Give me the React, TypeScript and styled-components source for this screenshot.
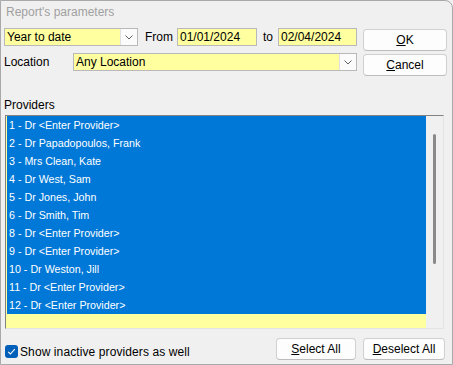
import React from 'react';
import styled, {createGlobalStyle} from 'styled-components';

const GlobalStyle = createGlobalStyle`
    html, body {
        margin: 0;
        padding: 0;
        background: #f0f0f0;
    }

    body {
        font-family: 'Liberation Sans', Arial, sans-serif;
        font-size: 12px;
        color: #000;
    }
`;

const Window = styled.div`
    width: 453px;
    height: 365px;
    box-sizing: border-box;
    background: #f0f0f0;
    border: 1px solid #a9a9a9;
    border-top-right-radius: 8px;
    padding: 0 5px 0 3px;
    display: flex;
    flex-direction: column;
    overflow: hidden;
`;

const Title = styled.div`
    height: 24px;
    line-height: 22px;
    padding-left: 2px;
    color: #a0a0a0;
`;

const TopArea = styled.div`
    display: flex;
    gap: 6px;
    margin-top: 3px;
`;

const Fields = styled.div`
    width: 353px;
    display: flex;
    flex-direction: column;
    gap: 7px;
`;

const Row = styled.div`
    display: flex;
    align-items: center;
    height: 18px;
`;

const Label = styled.span<{$left?: number; $right?: number}>`
    margin-left: ${(p) => p.$left ?? 0}px;
    margin-right: ${(p) => p.$right ?? 0}px;
    white-space: nowrap;
`;

const Field = styled.div<{$width: number}>`
    width: ${(p) => p.$width}px;
    height: 18px;
    box-sizing: border-box;
    background: #ffffa0;
    border: 1px solid #b9b9b9;
    display: flex;
    align-items: center;
    padding-left: 2px;
    line-height: 16px;
    white-space: nowrap;
    overflow: hidden;
`;

const FieldText = styled.span`
    flex: 1;
`;

const DropButton = styled.span`
    width: 17px;
    height: 16px;
    box-sizing: border-box;
    background: #fbfbfb;
    border-left: 1px solid #e0e0e0;
    display: flex;
    align-items: center;
    justify-content: center;

    svg {
        width: 8px;
        height: 5px;
    }
`;

const Buttons = styled.div`
    width: 84px;
    display: flex;
    flex-direction: column;
    gap: 3px;
    margin-top: 1px;
`;

const Button = styled.button<{$width?: number}>`
    appearance: none;
    width: ${(p) => (p.$width ? `${p.$width}px` : '100%')};
    height: 22px;
    box-sizing: border-box;
    background: #fdfdfd;
    border: 1px solid #d0d0d0;
    border-bottom-color: #bcbcbc;
    border-radius: 4px;
    font-family: inherit;
    font-size: 12px;
    color: #000;
    padding: 0;
    line-height: 20px;

    u {
        text-decoration: underline;
        text-underline-offset: 1px;
    }
`;

const SectionLabel = styled.div`
    margin-top: 22px;
    height: 14px;
    line-height: 14px;
`;

const ListBox = styled.div`
    margin: 3px 3px 0 1px;
    height: 214px;
    box-sizing: border-box;
    border: 1px solid #e3e3e3;
    border-top-color: #828282;
    border-left-color: #828282;
    display: flex;
    background: #ffffa0;
`;

const Items = styled.div`
    flex: 1;
    padding-left: 1px;
    display: flex;
    flex-direction: column;
`;

const Item = styled.div<{$selected?: boolean}>`
    height: 18px;
    line-height: 18px;
    padding-left: 2px;
    font-size: 10.7px;
    background: ${(p) => (p.$selected ? '#0078d7' : 'transparent')};
    color: ${(p) => (p.$selected ? '#fff' : '#000')};
    white-space: nowrap;
`;

const ScrollTrack = styled.div`
    width: 17px;
    background: #f0f0f0;
    display: flex;
    justify-content: center;
    padding-top: 18px;
    box-sizing: border-box;
`;

const ScrollThumb = styled.div`
    width: 3px;
    height: 130px;
    border-radius: 2px;
    background: #8a8a8a;
`;

const Footer = styled.div`
    margin: 9px 2px 0 1px;
    height: 22px;
    display: flex;
    align-items: center;
    gap: 7px;
`;

const CheckLabel = styled.label`
    display: flex;
    align-items: center;
    gap: 2px;
    margin-right: auto;
    margin-top: 5px;
    white-space: nowrap;
    letter-spacing: 0.1px;
`;

const CheckBox = styled.span`
    width: 13px;
    height: 13px;
    box-sizing: border-box;
    border-radius: 3px;
    background: #005fb8;
    display: flex;
    align-items: center;
    justify-content: center;

    svg {
        width: 9px;
        height: 9px;
    }
`;

const Chevron = () => (
    <svg viewBox='0 0 8 5'>
        <path d='M0.5 0.5 L4 4 L7.5 0.5' fill='none' stroke='#606060' strokeWidth='1' />
    </svg>
);

const providers = [
    '1 - Dr <Enter Provider>',
    '2 - Dr Papadopoulos, Frank',
    '3 - Mrs Clean, Kate',
    '4 - Dr West, Sam',
    '5 - Dr Jones, John',
    '6 - Dr Smith, Tim',
    '8 - Dr <Enter Provider>',
    '9 - Dr <Enter Provider>',
    '10 - Dr Weston, Jill',
    '11 - Dr <Enter Provider>',
    '12 - Dr <Enter Provider>'
];

const App = () => (
    <>
        <GlobalStyle />
        <Window>
            <Title>Report's parameters</Title>

            <TopArea>
                <Fields>
                    <Row>
                        <Field $width={134}>
                            <FieldText>Year to date</FieldText>
                            <DropButton>
                                <Chevron />
                            </DropButton>
                        </Field>
                        <Label $left={7} $right={4}>From</Label>
                        <Field $width={80}>01/01/2024</Field>
                        <Label $left={6} $right={5}>to</Label>
                        <Field $width={79}>02/04/2024</Field>
                    </Row>
                    <Row>
                        <Label $right={20}>Location</Label>
                        <Field $width={284} style={{marginLeft: 'auto'}}>
                            <FieldText>Any Location</FieldText>
                            <DropButton>
                                <Chevron />
                            </DropButton>
                        </Field>
                    </Row>
                </Fields>
                <Buttons>
                    <Button type='button'>
                        <u>O</u>K
                    </Button>
                    <Button type='button'>
                        <u>C</u>ancel
                    </Button>
                </Buttons>
            </TopArea>

            <SectionLabel>Providers</SectionLabel>
            <ListBox>
                <Items>
                    {providers.map((name) => (
                        <Item key={name} $selected>
                            {name}
                        </Item>
                    ))}
                </Items>
                <ScrollTrack>
                    <ScrollThumb />
                </ScrollTrack>
            </ListBox>

            <Footer>
                <CheckLabel>
                    <CheckBox>
                        <svg viewBox='0 0 9 9'>
                            <path
                                d='M1.2 4.8 L3.4 7 L7.8 2.2'
                                fill='none'
                                stroke='#fff'
                                strokeWidth='1.1'
                            />
                        </svg>
                    </CheckBox>
                    Show inactive providers as well
                </CheckLabel>
                <Button type='button' $width={80}>
                    <u>S</u>elect All
                </Button>
                <Button type='button' $width={82}>
                    <u>D</u>eselect All
                </Button>
            </Footer>
        </Window>
    </>
);

export default App;
